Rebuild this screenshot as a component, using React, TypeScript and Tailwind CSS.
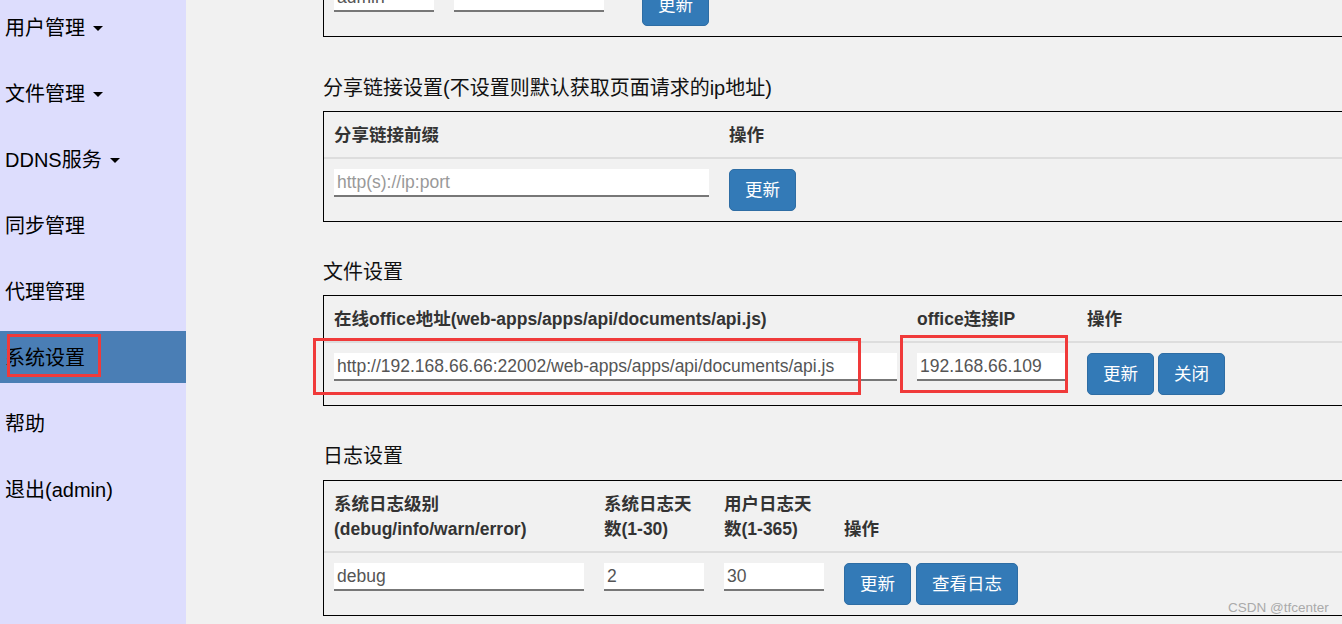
import React from "react";

const font = { fontFamily: '"Liberation Sans", Arial, "Noto Sans CJK SC", sans-serif' };

const menu = [
  { label: "用户管理", caret: true },
  { label: "文件管理", caret: true },
  { label: "DDNS服务", caret: true },
  { label: "同步管理" },
  { label: "代理管理" },
  { label: "系统设置", active: true },
  { label: "帮助" },
  { label: "退出(admin)" },
];

function Caret() {
  return (
    <span className="ml-[8px] inline-block h-0 w-0 border-l-[5px] border-r-[5px] border-t-[5px] border-l-transparent border-r-transparent border-t-black align-middle" />
  );
}

function Input({ w, value, placeholder }: { w: number; value?: string; placeholder?: string }) {
  return (
    <input
      readOnly
      defaultValue={value}
      placeholder={placeholder}
      style={{ width: w }}
      className="h-[28px] border-0 border-b-2 border-[#777] bg-white pl-[3px] pt-[1px] text-[17.5px] leading-[26px] text-[#555] outline-none placeholder:text-[#999]"
    />
  );
}

function Btn({ children, className = "" }: { children: React.ReactNode; className?: string }) {
  return (
    <button
      className={
        "h-[42px] rounded-[5px] border border-[#2e6da4] bg-[#337ab7] px-[15px] text-[17.5px] leading-[25px] text-white " +
        className
      }
    >
      {children}
    </button>
  );
}

function Th({ w, children }: { w?: number; children: React.ReactNode }) {
  return (
    <div
      style={w ? { width: w } : undefined}
      className="shrink-0 px-[10px] pt-[11px] pb-[9px] text-[17.5px] font-bold leading-[25px] text-[#333]"
    >
      {children}
    </div>
  );
}

function Td({ w, children }: { w?: number; children: React.ReactNode }) {
  return (
    <div style={w ? { width: w } : undefined} className="flex shrink-0 items-start p-[10px]">
      {children}
    </div>
  );
}

function Title({ children, className = "" }: { children: React.ReactNode; className?: string }) {
  return <div className={"h-[28px] text-[20px] leading-[30px] text-[#111] " + className}>{children}</div>;
}

export default function App() {
  return (
    <div style={font} className="relative flex h-[624px] w-[1342px] overflow-hidden bg-[#f1f1f1]">
      <aside className="flex w-[186px] shrink-0 flex-col gap-[14px] bg-[#ddddfd] pt-[1px]">
        {menu.map((m) => (
          <div
            key={m.label}
            className={
              "flex h-[52px] items-center pl-[5px] pt-[2px] text-[20px] text-black " + (m.active ? "bg-[#4a7eb5]" : "")
            }
          >
            {m.label}
            {m.caret && <Caret />}
          </div>
        ))}
      </aside>

      <main className="w-[1100px] shrink-0 pl-[137px]">
        {/* 上部（一部分だけ見えている） */}
        <div className="-mt-[27px] w-[1100px] border border-black">
          <div className="flex">
            <Td w={120}>
              <Input w={100} value="admin" />
            </Td>
            <Td w={188}>
              <Input w={150} value="" />
            </Td>
            <Td>
              <Btn>更新</Btn>
            </Td>
          </div>
        </div>

        <Title className="mt-[36px] mb-[10px]">分享链接设置(不设置则默认获取页面请求的ip地址)</Title>
        <div className="w-[1100px] border border-black">
          <div className="flex border-b-2 border-[#ddd]">
            <Th w={395}>分享链接前缀</Th>
            <Th>操作</Th>
          </div>
          <div className="flex">
            <Td w={395}>
              <Input w={375} placeholder="http(s)://ip:port" />
            </Td>
            <Td>
              <Btn>更新</Btn>
            </Td>
          </div>
        </div>

        <Title className="mt-[35px] mb-[10px]">文件设置</Title>
        <div className="w-[1100px] border border-black">
          <div className="flex border-b-2 border-[#ddd]">
            <Th w={583}>在线office地址(web-apps/apps/api/documents/api.js)</Th>
            <Th w={170}>office连接IP</Th>
            <Th>操作</Th>
          </div>
          <div className="flex">
            <Td w={583}>
              <Input w={563} value="http://192.168.66.66:22002/web-apps/apps/api/documents/api.js" />
            </Td>
            <Td w={170}>
              <Input w={148} value="192.168.66.109" />
            </Td>
            <Td>
              <Btn>更新</Btn>
              <Btn className="ml-[4px]">关闭</Btn>
            </Td>
          </div>
        </div>

        <Title className="mt-[35px] mb-[11px]">日志设置</Title>
        <div className="w-[1100px] border border-black">
          <div className="flex items-end border-b-2 border-[#ddd]">
            <Th w={270}>
              系统日志级别
              <br />
              (debug/info/warn/error)
            </Th>
            <Th w={120}>
              系统日志天
              <br />
              数(1-30)
            </Th>
            <Th w={120}>
              用户日志天
              <br />
              数(1-365)
            </Th>
            <Th>操作</Th>
          </div>
          <div className="flex">
            <Td w={270}>
              <Input w={250} value="debug" />
            </Td>
            <Td w={120}>
              <Input w={100} value="2" />
            </Td>
            <Td w={120}>
              <Input w={100} value="30" />
            </Td>
            <Td>
              <Btn>更新</Btn>
              <Btn className="ml-[5px]">查看日志</Btn>
            </Td>
          </div>
        </div>
      </main>

      {/* 赤枠の注釈 */}
      <div className="pointer-events-none absolute left-[7px] top-[334px] h-[43px] w-[94px] border-[3px] border-[#f03a3a]" />
      <div className="pointer-events-none absolute left-[313px] top-[338px] h-[57px] w-[548px] border-[3px] border-[#f03a3a]" />
      <div className="pointer-events-none absolute left-[900px] top-[335px] h-[58px] w-[168px] border-[3px] border-[#f03a3a]" />

      <div className="absolute left-[1228px] top-[600px] text-[13.5px] leading-[16px] text-[#aaa]">CSDN @tfcenter</div>
    </div>
  );
}
